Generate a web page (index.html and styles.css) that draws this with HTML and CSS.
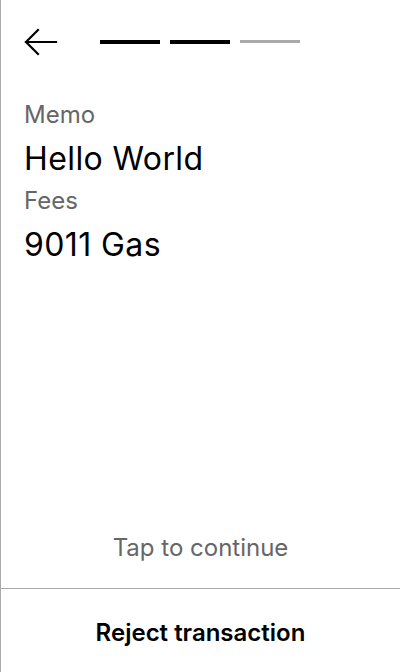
FILE: index.html
```html
<!DOCTYPE html>
<html>
<head>
<meta charset="utf-8">
<link rel="stylesheet" href="styles.css">
</head>
<body>
<div class="screen">
  <div class="header">
    <button class="back" aria-label="Back">
      <svg width="34" height="30" viewBox="0 0 34 30" fill="none" stroke="#000" stroke-width="2.2" stroke-linecap="square">
        <path d="M2 14H32"/>
        <path d="M14 2L2 14L14 26"/>
      </svg>
    </button>
    <div class="steps">
      <span class="step done"></span>
      <span class="step done"></span>
      <span class="step"></span>
    </div>
  </div>
  <div class="content">
    <div class="label">Memo</div>
    <div class="value">Hello World</div>
    <div class="label">Fees</div>
    <div class="value">9011 Gas</div>
  </div>
  <div class="tap">Tap to continue</div>
  <div class="footer">
    <button class="reject">Reject transaction</button>
  </div>
</div>
</body>
</html>
```

FILE: styles.css
```css
html, body {
  margin: 0;
  padding: 0;
  background: #fff;
}
body {
  font-family: Inter, "Noto Sans", sans-serif;
  color: #000;
}
.screen {
  width: 400px;
  height: 672px;
  box-sizing: border-box;
  border-left: 1px solid #aaa;
  display: flex;
  flex-direction: column;
}
.header {
  display: flex;
  align-items: center;
  padding: 28px 0 0 23px;
  height: 30px;
}
.back {
  border: 0;
  background: none;
  padding: 0;
  width: 34px;
  height: 30px;
  display: block;
}
.back svg { display: block; }
.steps {
  display: flex;
  gap: 10px;
  margin-left: 42px;
  align-items: flex-start;
  height: 30px;
  padding-top: 12px;
  box-sizing: border-box;
}
.step {
  width: 60px;
  height: 3px;
  background: #aaa;
}
.step.done {
  height: 4px;
  background: #000;
}
.content {
  padding: 43px 23px 0 23px;
  flex: 1;
}
.label {
  font-size: 24px;
  line-height: 28px;
  color: #666;
}
.value {
  font-size: 32px;
  line-height: 36px;
  letter-spacing: 0.4px;
  margin-top: 12px;
  margin-bottom: 10px;
}
.tap {
  text-align: center;
  font-size: 24px;
  line-height: 28px;
  color: #666;
  padding-bottom: 26px;
}
.footer {
  border-top: 1px solid #aaa;
  height: 83px;
  display: flex;
  align-items: center;
  justify-content: center;
}
.reject {
  border: 0;
  background: none;
  font-family: Inter, "Noto Sans", sans-serif;
  font-weight: 600;
  font-size: 24px;
  color: #000;
  padding: 0;
  margin-top: 3px;
}
```
